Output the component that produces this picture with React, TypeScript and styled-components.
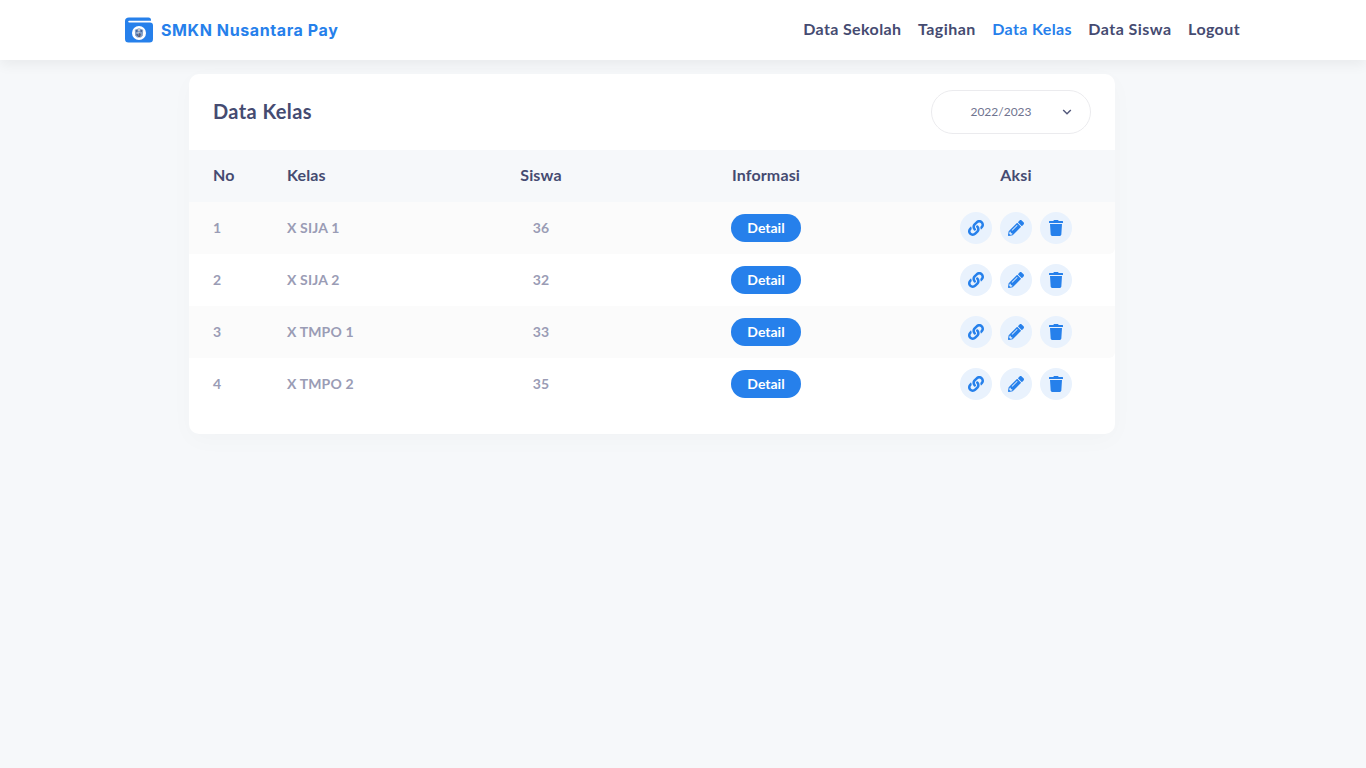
import React from "react";
import styled, { createGlobalStyle } from "styled-components";
import { FaLink, FaPencilAlt, FaTrash } from "react-icons/fa";

const GlobalStyle = createGlobalStyle`
  *, *::before, *::after { box-sizing: border-box; }
  body {
    margin: 0;
    min-height: 100vh;
    background: #f6f8fa;
    color: #454b71;
    font-family: Lato, "Open Sans", sans-serif;
    overflow: hidden;
  }
`;

const Navbar = styled.header`
  position: relative;
  display: flex;
  justify-content: space-between;
  align-items: center;
  height: 60px;
  padding: 0 126px 0 125px;
  background: #fff;
  box-shadow: 0 5px 12px rgba(0, 0, 0, 0.055);
`;

const Brand = styled.a`
  display: flex;
  align-items: center;
  gap: 8px;
  color: #2680eb;
  font: 700 16px/24px Inter, sans-serif;
  letter-spacing: 0.6px;
  white-space: nowrap;
`;

const Menu = styled.nav`
  display: flex;
  gap: 16.5px;
  padding-bottom: 2px;
`;

const MenuLink = styled.a<{ $active?: boolean; $track: number }>`
  color: ${(p) => (p.$active ? "#2680eb" : "#454b71")};
  font-size: 16px;
  font-weight: 700;
  line-height: 24px;
  letter-spacing: ${(p) => p.$track}px;
  white-space: nowrap;
`;

const Card = styled.main`
  width: 926px;
  height: 360px;
  margin: 14px 0 0 189px;
  overflow: hidden;
  border-radius: 10px;
  background: #fff;
  box-shadow: 0 6px 24px rgba(0, 0, 0, 0.025);
`;

const CardHeader = styled.div`
  display: flex;
  justify-content: space-between;
  align-items: center;
  height: 76px;
  padding: 0 24px;
`;

const Title = styled.h1`
  margin: 0;
  padding-bottom: 2px;
  font-size: 20px;
  font-weight: 700;
  line-height: 30px;
  letter-spacing: 0.4px;
`;

const YearSelect = styled.button`
  display: flex;
  align-items: center;
  width: 160px;
  height: 44px;
  padding: 0 18px 0 0;
  border: 1px solid #ebebee;
  border-radius: 22px;
  background: #fff;
  color: #70748f;
  font: 400 12px Lato, sans-serif;
`;

const Year = styled.span`
  flex: 1;
  padding: 0 0 2px 8px;
  text-align: center;
`;

const Row = styled.div<{ $head?: boolean; $striped?: boolean }>`
  display: grid;
  grid-template-columns: 74px 154px 200px 250px 250px;
  align-items: center;
  height: 52px;
  padding-left: 24px;
  border-bottom-right-radius: ${(p) => (p.$head ? 0 : 6)}px;
  background: ${(p) => (p.$head ? "#f6f8fa" : p.$striped ? "#fbfbfb" : "#fff")};
  color: ${(p) => (p.$head ? "#454b71" : "#9a9cb5")};
  font-size: ${(p) => (p.$head ? 16 : 14)}px;
  font-weight: 700;
`;

const Cell = styled.div<{ $center?: boolean }>`
  display: flex;
  justify-content: ${(p) => (p.$center ? "center" : "flex-start")};
  gap: 8px;
  letter-spacing: 0.15px;
  white-space: nowrap;
`;

const TextCell = styled(Cell)`
  padding-bottom: 2px;
`;

const HeadCell = styled(Cell)`
  padding-bottom: 3px;
`;

const DetailButton = styled.button`
  width: 70px;
  height: 28px;
  padding: 0 0 1px;
  border: 0;
  border-radius: 14px;
  background: #2680eb;
  color: #fff;
  font: 700 14px Lato, sans-serif;
`;

const IconButton = styled.button`
  display: grid;
  place-items: center;
  width: 32px;
  height: 32px;
  padding: 0;
  border: 0;
  border-radius: 50%;
  background: #e9f2fd;
  color: #2680eb;
  font-size: 16px;
`;

const Logo = () => (
  <svg width="28" height="26" viewBox="0 0 28 26">
    <path fill="#2680eb" d="M4 0.5H23.5Q26 0.5 26 3V3.7H4.2Q3.2 3.7 3.2 4.6T4.2 5.5H25Q28 5.5 28 8.5V22Q28 25.5 24.5 25.5H3.5Q0 25.5 0 22V4Q0 0.5 4 0.5Z" />
    <circle cx="14" cy="16" r="7" fill="#fff" />
    <path fill="#7f9fc8" d="M9.8 12.8 14 11.2 18.2 12.8 17.8 18.5 16 20.5H12L10.2 18.5Z" />
    <path fill="#4a6699" d="M11 13h1.5v2H11zM15.5 13H17v2h-1.5zM11 17h2v2h-1z" />
    <path fill="#c5c3c8" d="M13 12h2v2h-2zM12.5 15h2v1.5h-2z" />
    <path fill="#625f70" d="m14 16 2 1-1 3h-2z" />
  </svg>
);

const menu = [
  { label: "Data Sekolah", track: 0.38 },
  { label: "Tagihan", track: 0.46 },
  { label: "Data Kelas", track: 0.36 },
  { label: "Data Siswa", track: 0.46 },
  { label: "Logout", track: 0.4 },
];

const classes = [
  { name: "X SIJA 1", students: 36 },
  { name: "X SIJA 2", students: 32 },
  { name: "X TMPO 1", students: 33 },
  { name: "X TMPO 2", students: 35 },
];

export default function App() {
  return (
    <>
      <GlobalStyle />
      <Navbar>
        <Brand><Logo />SMKN Nusantara Pay</Brand>
        <Menu>
          {menu.map((m) => (
            <MenuLink key={m.label} $track={m.track} $active={m.label === "Data Kelas"}>{m.label}</MenuLink>
          ))}
        </Menu>
      </Navbar>
      <Card>
        <CardHeader>
          <Title>Data Kelas</Title>
          <YearSelect>
            <Year>2022/2023</Year>
            <svg width="10" height="8" viewBox="0 0 10 8" fill="none" stroke="#555b7d" strokeWidth="1.5">
              <path d="m1.2 2 3.8 3.8L8.8 2" />
            </svg>
          </YearSelect>
        </CardHeader>
        <Row $head>
          <HeadCell>No</HeadCell><HeadCell>Kelas</HeadCell><HeadCell $center>Siswa</HeadCell>
          <HeadCell $center>Informasi</HeadCell><HeadCell $center>Aksi</HeadCell>
        </Row>
        {classes.map((c, i) => (
          <Row key={c.name} $striped={i % 2 === 0}>
            <TextCell>{i + 1}</TextCell>
            <TextCell>{c.name}</TextCell>
            <TextCell $center>{c.students}</TextCell>
            <Cell $center><DetailButton>Detail</DetailButton></Cell>
            <Cell $center>
              <IconButton aria-label="Link"><FaLink /></IconButton>
              <IconButton aria-label="Edit"><FaPencilAlt /></IconButton>
              <IconButton aria-label="Hapus"><FaTrash /></IconButton>
            </Cell>
          </Row>
        ))}
      </Card>
    </>
  );
}
